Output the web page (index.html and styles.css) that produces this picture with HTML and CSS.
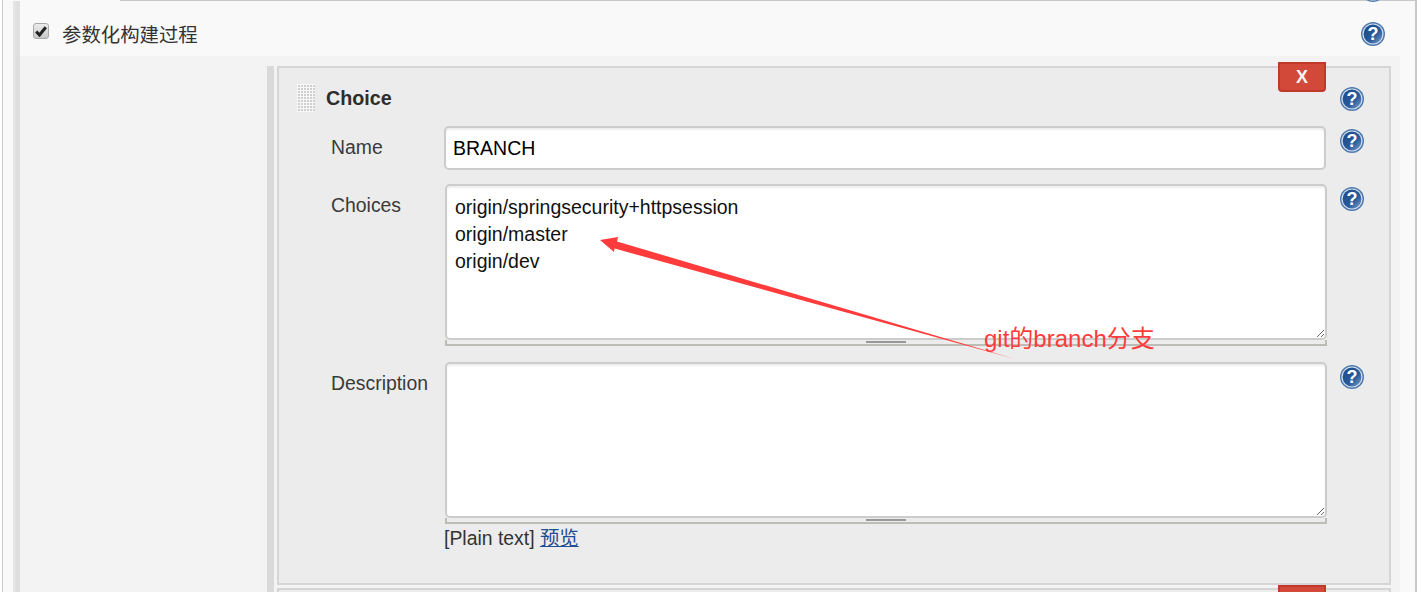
FILE: index.html
```html
<!DOCTYPE html>
<html lang="zh">
<head>
  <meta charset="UTF-8">
  <title>参数化构建过程</title>
  <link rel="stylesheet" href="styles.css">
</head>
<body>
  <svg class="defs" width="0" height="0">
    <defs>
      <linearGradient id="help-fill" x1="0" y1="0" x2="1" y2="1">
        <stop offset="0" stop-color="#1c4a8a"/>
        <stop offset="0.6" stop-color="#2a5a9a"/>
        <stop offset="1" stop-color="#7fa3cf"/>
      </linearGradient>
      <symbol id="help" viewBox="0 0 24 24">
        <circle cx="12" cy="12" r="12" fill="#5079ad"/>
        <circle cx="12" cy="12" r="10.6" fill="#d3e0ee"/>
        <circle cx="12" cy="12" r="9.4" fill="url(#help-fill)"/>
        <text x="12" y="18.4" text-anchor="middle" class="help-mark">?</text>
      </symbol>
    </defs>
  </svg>

  <div class="page">
    <div class="top-line"></div>
    <div class="section">
      <div class="param-row">
        <span class="check">
          <svg width="12" height="12" viewBox="0 0 12 12"><path d="M1.2 6.5 L4.5 10 L10.8 2.2" fill="none" stroke="#222" stroke-width="3"/></svg>
        </span>
        <span class="param-title">参数化构建过程</span>
        <svg class="help"><use href="#help"/></svg>
      </div>

      <div class="sub">
        <div class="chunk">
          <div class="choice">
            <button class="del">X</button>
            <div class="row head-row">
              <div class="head">
                <span class="grippy"></span>
                <b>Choice</b>
              </div>
              <svg class="help"><use href="#help"/></svg>
            </div>

            <div class="row name-row">
              <label class="lbl">Name</label>
              <input class="text-in" type="text" value="BRANCH">
              <svg class="help"><use href="#help"/></svg>
            </div>

            <div class="row choices-row">
              <label class="lbl">Choices</label>
              <div>
                <textarea class="area" spellcheck="false">origin/springsecurity+httpsession
origin/master
origin/dev</textarea>
                <div class="handle"><span></span></div>
              </div>
              <svg class="help"><use href="#help"/></svg>
            </div>

            <div class="row desc-row">
              <label class="lbl">Description</label>
              <div>
                <textarea class="area" spellcheck="false"></textarea>
                <div class="handle"><span></span></div>
                <div class="hint">[Plain text] <a href="#">预览</a></div>
              </div>
              <svg class="help"><use href="#help"/></svg>
            </div>
          </div>

          <div class="choice next">
            <button class="del"></button>
          </div>
        </div>
      </div>
    </div>
  </div>

  <!-- annotation drawn on top of the screenshot -->
  <svg class="help help-cut"><use href="#help"/></svg>
  <svg class="arrow" width="1421" height="592" viewBox="0 0 1421 592">
    <polygon points="600,240 618,237 617,241.5 1015,359 614.5,248.5 614,252" fill="#ff3b3b"/>
  </svg>
  <div class="note">git的branch分支</div>
</body>
</html>
```

FILE: styles.css
```css
html, body {
  margin: 0;
  height: 592px;
  overflow: hidden;
}
body {
  background: #fff;
  font-family: "Liberation Sans", "Noto Sans CJK SC", sans-serif;
  color: #333;
  position: relative;
}
.defs { position: absolute; }
.help-mark {
  font-family: "Liberation Sans", sans-serif;
  font-size: 18px;
  font-weight: bold;
  fill: #fff;
}
.page {
  box-sizing: border-box;
  width: 1415px;
  height: 592px;
  margin-left: 2px;
  border-left: 1px solid #ccc;
  border-right: 2px solid #c8c8c8;
  background: #f9f9f9;
  padding-left: 10px;
  overflow: hidden;
}
.top-line {
  height: 1px;
  margin: 0 0 0 107px;
  background: #c8c8c8;
}
.section {
  border-left: 3px solid #e4e4e4;
  height: 591px;
}
.param-row {
  box-sizing: border-box;
  height: 55px;
  border-left: 4px solid #e0e0e0;
  display: flex;
  align-items: flex-start;
  padding: 21px 30px 0 13px;
}
.check {
  width: 14px;
  height: 14px;
  margin: 1px 13px 0 0;
  border: 1px solid #a8a8a8;
  border-radius: 3px;
  background: linear-gradient(#ececec, #c8c8c8);
  display: flex;
  align-items: center;
  justify-content: center;
}
.param-title {
  font-size: 19.4px;
  line-height: 26px;
  flex: 1;
}
.help {
  width: 24px;
  height: 24px;
  display: block;
}
.help-cut {
  position: absolute;
  left: 1361px;
  top: -22px;
}
.sub {
  box-sizing: border-box;
  background: #f3f3f3;
  margin-right: 15px;
  height: 536px;
  border-left: 4px solid #dedede;
  padding: 10px 9px 0 247px;
}
.chunk {
  border-left: 7px solid #d9d9d9;
  padding-left: 3px;
  height: 526px;
}
.choice {
  box-sizing: border-box;
  position: relative;
  height: 519px;
  border: 2px solid #d5d5d5;
  background: #ececec;
  padding: 16px 25px 0 17px;
}
.choice.next {
  margin-top: 3px;
  height: 40px;
  padding: 0;
}
.del {
  position: absolute;
  top: -6px;
  right: 63px;
  width: 48px;
  height: 30px;
  padding: 0;
  border: 2px solid #c0392b;
  border-radius: 0 0 4px 4px;
  background: #d24939;
  color: #f5f5f5;
  font: bold 18px "Liberation Sans", sans-serif;
}
.next .del { top: -5px; }
.row {
  display: grid;
  grid-template-columns: 148px 883px 1fr;
}
.row > .help {
  justify-self: end;
  margin-top: 3px;
}
.head-row {
  height: 28px;
  margin-bottom: 14px;
}
.head {
  display: flex;
  align-items: center;
  gap: 11px;
  grid-column: 1 / 3;
}
.head b {
  font-size: 19.7px;
  color: #2d2d2d;
}
.grippy {
  width: 18px;
  height: 28px;
  background-color: #cfcfcf;
  background-image: linear-gradient(#f8f8f8 1px, transparent 1px), linear-gradient(90deg, #f8f8f8 1px, transparent 1px);
  background-size: 3px 3px;
}
.lbl {
  font-size: 19.4px;
  padding: 10px 0 0 35px;
  color: #3a3a3a;
}
.name-row {
  height: 44px;
  margin-bottom: 14px;
}
.text-in {
  box-sizing: border-box;
  width: 882px;
  height: 44px;
  border: 2px solid #ccc;
  border-radius: 5px;
  padding: 0 7px;
  font: 19.5px "Liberation Sans", sans-serif;
  color: #000;
  outline: none;
  box-shadow: inset 0 2px 2px #eee;
}
.choices-row { margin-bottom: 16px; }
.row > div { padding-left: 1px; }
.area {
  box-sizing: border-box;
  display: block;
  width: 882px;
  height: 156px;
  border: 2px solid #ccc;
  border-radius: 5px;
  padding: 8px 8px;
  margin: 0;
  font: 19.5px/27px "Liberation Sans", sans-serif;
  color: #111;
  outline: none;
  background: #fff;
  box-shadow: inset 0 2px 2px #eee;
}
.handle {
  box-sizing: border-box;
  height: 6px;
  width: 882px;
  border: 2px solid #bdbdb6;
  border-top: none;
  display: flex;
  justify-content: center;
}
.handle span {
  width: 40px;
  height: 2px;
  margin-top: 1px;
  background: #999;
}
.hint {
  font-size: 19.4px;
  margin: 2px 0 0 -1px;
  line-height: 24px;
  color: #333;
}
.hint a { color: #1f4e96; }
.arrow {
  position: absolute;
  left: 0;
  top: 0;
  pointer-events: none;
}
.note {
  position: absolute;
  left: 984px;
  top: 323px;
  font-size: 24px;
  line-height: 32px;
  color: #ff3b3b;
}
```
